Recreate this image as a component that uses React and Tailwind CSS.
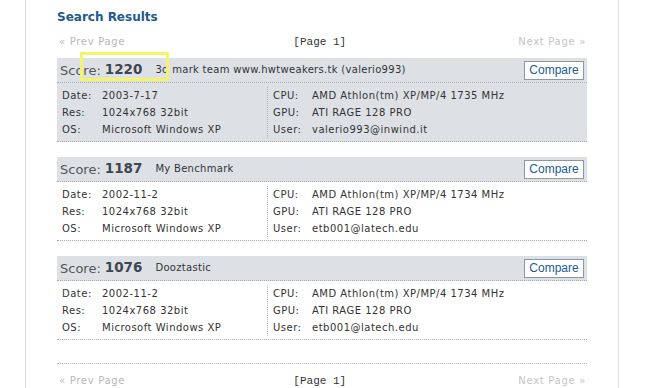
import React from "react";

const results = [
  {
    score: "1220",
    desc: "3d mark team www.hwtweakers.tk (valerio993)",
    date: "2003-7-17",
    res: "1024x768 32bit",
    os: "Microsoft Windows XP",
    cpu: "AMD Athlon(tm) XP/MP/4 1735 MHz",
    gpu: "ATI RAGE 128 PRO",
    user: "valerio993@inwind.it",
    highlight: true,
  },
  {
    score: "1187",
    desc: "My Benchmark",
    date: "2002-11-2",
    res: "1024x768 32bit",
    os: "Microsoft Windows XP",
    cpu: "AMD Athlon(tm) XP/MP/4 1734 MHz",
    gpu: "ATI RAGE 128 PRO",
    user: "etb001@latech.edu",
  },
  {
    score: "1076",
    desc: "Dooztastic",
    date: "2002-11-2",
    res: "1024x768 32bit",
    os: "Microsoft Windows XP",
    cpu: "AMD Athlon(tm) XP/MP/4 1734 MHz",
    gpu: "ATI RAGE 128 PRO",
    user: "etb001@latech.edu",
  },
];

function Pager() {
  return (
    <div className="flex items-center justify-between h-[16px] text-[10px] leading-none">
      <span className="text-[#b8b8b8] pl-[2px] tracking-[0.7px]">« Prev Page</span>
      <span className="text-[#333] text-[11px] pr-[4px]" style={{ fontFamily: '"Liberation Mono", monospace' }}>[Page 1]</span>
      <span className="text-[#c4c4c4] pr-[1px] tracking-[0.7px]">Next Page »</span>
    </div>
  );
}

function Row({ label, value, labelW }) {
  return (
    <div className="flex h-[17px] items-center">
      <span className={labelW}>{label}</span>
      <span>{value}</span>
    </div>
  );
}

function Card({ r }) {
  return (
    <div className={r.highlight ? "bg-[#dde1e6]" : "bg-white"}>
      <div className="flex items-center h-[25px] bg-[#dde1e6] border-b border-dotted border-[#a9adb3] pl-[3px] pr-[3px]">
        <span className="text-[13px] text-[#555] leading-none">Score:</span>
        <span className="text-[13.5px] font-bold text-[#3f4650] leading-none ml-[4px]">{r.score}</span>
        <span className="text-[10px] text-[#333] leading-none ml-[13px] tracking-[0.3px]">{r.desc}</span>
        <button
          className="ml-auto h-[19px] w-[60px] bg-white border border-[#8a97a4] text-[#1d5a97] text-[12px] leading-none"
          style={{ fontFamily: '"Liberation Sans", Arial, sans-serif' }}
        >
          Compare
        </button>
      </div>
      <div className="flex border-b border-dotted border-[#a9adb3] text-[10px] text-[#333] tracking-[0.5px] pt-[4px] pb-[3px]">
        <div className="w-[211px] pl-[5px] border-r border-dotted border-[#b5b9be]">
          <Row label="Date:" value={r.date} labelW="w-[40px]" />
          <Row label="Res:" value={r.res} labelW="w-[40px]" />
          <Row label="OS:" value={r.os} labelW="w-[40px]" />
        </div>
        <div className="pl-[5px]">
          <Row label="CPU:" value={r.cpu} labelW="w-[39px]" />
          <Row label="GPU:" value={r.gpu} labelW="w-[39px]" />
          <Row label="User:" value={r.user} labelW="w-[39px]" />
        </div>
      </div>
    </div>
  );
}

export default function App() {
  return (
    <div
      className="relative w-[650px] h-[388px] bg-white overflow-hidden flex"
      style={{ fontFamily: '"DejaVu Sans", Verdana, sans-serif' }}
    >
      <div className="w-[26px] border-r border-[#dcdcdc] shrink-0" />
      <div className="w-[593px] border-r border-[#e2e2e2] shrink-0 pl-[31px] pr-[31px] pt-[9px]">
        <h1 className="text-[12px] font-bold text-[#1d5a8e] leading-none h-[16px] flex items-center">Search Results</h1>
        <div className="mt-[9px]">
          <Pager />
        </div>
        <div className="mt-[8px] flex flex-col gap-[15px]">
          {results.map((r, i) => (
            <Card key={i} r={r} />
          ))}
        </div>
        <div className="mt-[23px] border-t border-dotted border-[#b5b9be]" />
        <div className="mt-[9px]">
          <Pager />
        </div>
      </div>
      <div className="absolute left-[80px] top-[52px] w-[89px] h-[29px] border-[3px] border-[#f3f46a] rounded-[1px]" />
    </div>
  );
}
